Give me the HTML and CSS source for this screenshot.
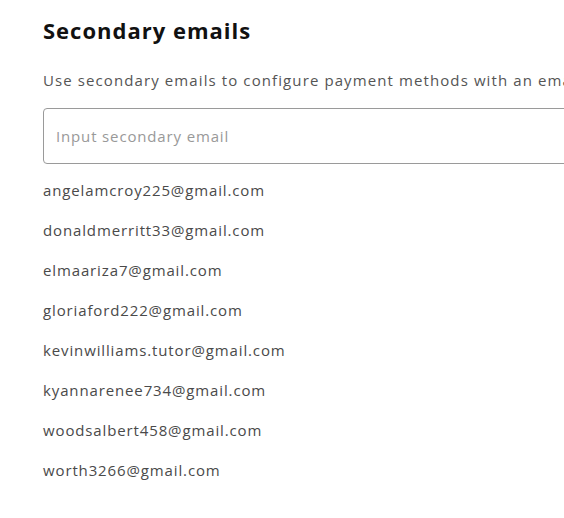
FILE: index.html
```html
<!DOCTYPE html>
<html>
<head>
<meta charset="utf-8">
<link rel="stylesheet" href="styles.css">
</head>
<body>
<main class="panel">
  <h1 class="title">Secondary emails</h1>
  <p class="desc">Use secondary emails to configure payment methods with an email address other than your primary one.</p>
  <input class="email-input" type="text" placeholder="Input secondary email">
  <ul class="email-list">
    <li>angelamcroy225@gmail.com</li>
    <li>donaldmerritt33@gmail.com</li>
    <li>elmaariza7@gmail.com</li>
    <li>gloriaford222@gmail.com</li>
    <li>kevinwilliams.tutor@gmail.com</li>
    <li>kyannarenee734@gmail.com</li>
    <li>woodsalbert458@gmail.com</li>
    <li>worth3266@gmail.com</li>
  </ul>
</main>
</body>
</html>
```
FILE: styles.css
```css
html, body {
  margin: 0;
  padding: 0;
  background: #fff;
  overflow: hidden;
}
body {
  font-family: "Open Sans", "Noto Sans", sans-serif;
  color: #4a4a4a;
}
.panel {
  padding: 14px 0 0 43px;
  width: 700px;
}
.title {
  margin: 0;
  font-size: 22px;
  line-height: 32px;
  font-weight: 700;
  letter-spacing: 1px;
  color: #111;
}
.desc {
  margin: 22px 0 0;
  width: 521px;
  font-size: 15px;
  line-height: 24px;
  letter-spacing: 1.1px;
  color: #555;
  white-space: nowrap;
  overflow: hidden;
}
.email-input {
  display: block;
  box-sizing: border-box;
  margin-top: 16px;
  width: 640px;
  height: 56px;
  padding: 0 12px;
  border: 1px solid #9a9a9a;
  border-radius: 4px;
  font-family: inherit;
  font-size: 15px;
  letter-spacing: 0.85px;
  color: #333;
  outline: none;
}
.email-input::placeholder {
  color: #999;
}
.email-list {
  list-style: none;
  margin: 6px 0 0;
  padding: 0;
}
.email-list li {
  font-size: 15px;
  line-height: 40px;
  letter-spacing: 0.87px;
  color: #4a4a4a;
}
```
